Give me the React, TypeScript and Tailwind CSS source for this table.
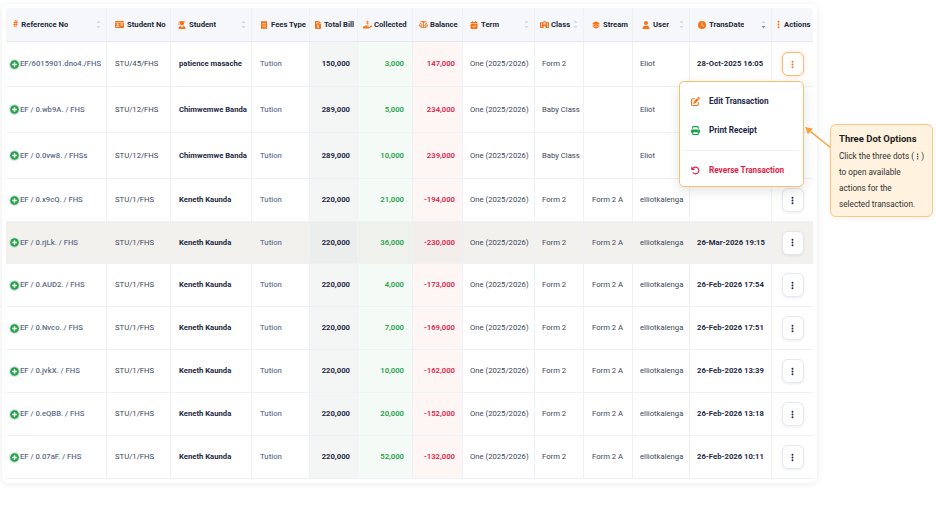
import React from "react";
import {
  FaIdCard,
  FaUserGraduate,
  FaReceipt,
  FaFileInvoiceDollar,
  FaHandHoldingDollar,
  FaScaleBalanced,
  FaCalendarCheck,
  FaSchool,
  FaLayerGroup,
  FaUser,
  FaClock,
  FaEllipsisVertical,
  FaPenToSquare,
  FaPrint,
  FaArrowRotateLeft,
} from "react-icons/fa6";

const GRID =
  "grid grid-cols-[101px_64px_81px_58px_48px_55px_50px_72px_49px_49px_57px_82px_41px]";

type Row = {
  ref: string;
  sno: string;
  name: string;
  bill: string;
  col: string;
  bal: string;
  cls: string;
  stream: string;
  user: string;
  date: string;
  h: string;
  hl?: boolean;
  btn: "active" | "none" | "normal";
};

const rows: Row[] = [
  { ref: "EF/6015901.dno4./FHS", sno: "STU/45/FHS", name: "patience masache", bill: "150,000", col: "3,000", bal: "147,000", cls: "Form 2", stream: "", user: "Eliot", date: "28-Oct-2025 16:05", h: "h-[45px]", btn: "active" },
  { ref: "EF / 0.wb9A. / FHS", sno: "STU/12/FHS", name: "Chimwemwe Banda", bill: "289,000", col: "5,000", bal: "234,000", cls: "Baby Class", stream: "", user: "Eliot", date: "", h: "h-[46px]", btn: "none" },
  { ref: "EF / 0.0vw8. / FHSs", sno: "STU/12/FHS", name: "Chimwemwe Banda", bill: "289,000", col: "10,000", bal: "239,000", cls: "Baby Class", stream: "", user: "Eliot", date: "", h: "h-[46px]", btn: "none" },
  { ref: "EF / 0.x9cQ. / FHS", sno: "STU/1/FHS", name: "Keneth Kaunda", bill: "220,000", col: "21,000", bal: "-194,000", cls: "Form 2", stream: "Form 2 A", user: "elliotkalenga", date: "", h: "h-[43px]", btn: "normal" },
  { ref: "EF / 0.rjLk. / FHS", sno: "STU/1/FHS", name: "Keneth Kaunda", bill: "220,000", col: "36,000", bal: "-230,000", cls: "Form 2", stream: "Form 2 A", user: "elliotkalenga", date: "26-Mar-2026 19:15", h: "h-[42px]", hl: true, btn: "normal" },
  { ref: "EF / 0.AUD2. / FHS", sno: "STU/1/FHS", name: "Keneth Kaunda", bill: "220,000", col: "4,000", bal: "-173,000", cls: "Form 2", stream: "Form 2 A", user: "elliotkalenga", date: "26-Feb-2026 17:54", h: "h-[43px]", btn: "normal" },
  { ref: "EF / 0.Nvco. / FHS", sno: "STU/1/FHS", name: "Keneth Kaunda", bill: "220,000", col: "7,000", bal: "-169,000", cls: "Form 2", stream: "Form 2 A", user: "elliotkalenga", date: "26-Feb-2026 17:51", h: "h-[43px]", btn: "normal" },
  { ref: "EF / 0.jvkX. / FHS", sno: "STU/1/FHS", name: "Keneth Kaunda", bill: "220,000", col: "10,000", bal: "-162,000", cls: "Form 2", stream: "Form 2 A", user: "elliotkalenga", date: "26-Feb-2026 13:39", h: "h-[43px]", btn: "normal" },
  { ref: "EF / 0.eQBB. / FHS", sno: "STU/1/FHS", name: "Keneth Kaunda", bill: "220,000", col: "20,000", bal: "-152,000", cls: "Form 2", stream: "Form 2 A", user: "elliotkalenga", date: "26-Feb-2026 13:18", h: "h-[43px]", btn: "normal" },
  { ref: "EF / 0.07aF. / FHS", sno: "STU/1/FHS", name: "Keneth Kaunda", bill: "220,000", col: "52,000", bal: "-132,000", cls: "Form 2", stream: "Form 2 A", user: "elliotkalenga", date: "26-Feb-2026 10:11", h: "h-[43px]", btn: "normal" },
];

function Sort({ down }: { down?: boolean }) {
  return (
    <svg width="5" height="9" viewBox="0 0 5 9" className="ml-auto shrink-0">
      <path d="M2.5 0.5 L4.5 3 L0.5 3 Z" fill="#d5dbe3" />
      <path d="M2.5 8.5 L4.5 6 L0.5 6 Z" fill={down ? "#8a94a6" : "#d5dbe3"} />
    </svg>
  );
}

function PlusIcon() {
  return (
    <svg width="11" height="11" viewBox="0 0 11 11" className="shrink-0">
      <circle cx="5.5" cy="5.5" r="5.5" fill="#dfe3e8" />
      <circle cx="5.5" cy="5.5" r="4.3" fill="#22a447" />
      <path d="M5.5 3.2 V7.8 M3.2 5.5 H7.8" stroke="#fff" strokeWidth="1.4" />
    </svg>
  );
}

const ic = "text-[#f97316] shrink-0";

function H({
  icon,
  label,
  sort,
  down,
  pl,
  gap = "gap-[3px]",
}: {
  icon: React.ReactNode;
  label: string;
  sort?: boolean;
  down?: boolean;
  pl: string;
  gap?: string;
}) {
  return (
    <div
      className={`flex items-center ${gap} ${pl} ${sort ? "pr-[5px]" : "pr-[1px]"} overflow-hidden whitespace-nowrap border-r border-[#eef1f5]`}
    >
      {icon}
      <span className="font-bold text-[#1e293b] overflow-hidden">{label}</span>
      {sort && <Sort down={down} />}
    </div>
  );
}

export default function App() {
  const cellB = "border-r border-[#eef1f5] flex items-center overflow-hidden whitespace-nowrap";
  return (
    <div className="relative w-[936px] h-[513px] bg-white font-['Roboto','Liberation_Sans',sans-serif] text-[7.7px] leading-none">
      <div className="absolute left-[2px] top-[4px] w-[815px] rounded-[6px] bg-white p-[4px] shadow-[0_1px_6px_rgba(15,23,42,0.09)]">
        {/* header */}
        <div className={`${GRID} h-[34px] bg-[#f5f7fa] border-b border-[#e6eaf0] rounded-t-[3px] text-[7.7px]`}>
          <H pl="pl-[7px]" icon={<span className="text-[#f97316] font-bold text-[9px]">#</span>} label="Reference No" sort />
          <H pl="pl-[8px]" icon={<FaIdCard size={9} className={ic} />} label="Student No" />
          <H pl="pl-[7px]" icon={<FaUserGraduate size={8} className={ic} />} label="Student" sort />
          <H pl="pl-[8px]" icon={<FaReceipt size={8} className={ic} />} label="Fees Type" />
          <H pl="pl-[4px]" gap="gap-[2px]" icon={<FaFileInvoiceDollar size={8} className={ic} />} label="Total Bill" />
          <H pl="pl-[5px]" gap="gap-[2px]" icon={<FaHandHoldingDollar size={9} className={ic} />} label="Collected" />
          <H pl="pl-[6px]" gap="gap-[2px]" icon={<FaScaleBalanced size={9} className={ic} />} label="Balance" />
          <H pl="pl-[7px]" icon={<FaCalendarCheck size={8} className={ic} />} label="Term" sort />
          <H pl="pl-[5px]" gap="gap-[2px]" icon={<FaSchool size={9} className={ic} />} label="Class" sort />
          <H pl="pl-[8px]" icon={<FaLayerGroup size={8} className={ic} />} label="Stream" />
          <H pl="pl-[9px]" icon={<FaUser size={8} className={ic} />} label="User" sort />
          <H pl="pl-[8px]" icon={<FaClock size={8} className={ic} />} label="TransDate" sort down />
          <div className="flex items-center gap-[1px] pl-[2px] overflow-hidden whitespace-nowrap">
            <FaEllipsisVertical size={9} className={ic} />
            <span className="font-bold text-[#1e293b]">Actions</span>
          </div>
        </div>
        {/* body */}
        {rows.map((r, i) => (
          <div
            key={i}
            className={`${GRID} ${r.h} border-b border-[#eef1f5] ${r.hl ? "bg-[#f3f1ee]" : "bg-white"}`}
          >
            <div className={`${cellB} pl-[3px] gap-[0px] font-medium text-[#5d6c89]`}>
              <PlusIcon />
              <span>{r.ref}</span>
            </div>
            <div className={`${cellB} px-[8px] text-[#3b4658]`}>{r.sno}</div>
            <div className={`${cellB} pl-[8px] pr-[1px] font-bold text-[#1e2a44]`}>{r.name}</div>
            <div className={`${cellB} px-[8px] font-medium text-[#6b7a99]`}>Tution</div>
            <div className={`${cellB} justify-end pr-[7px] font-bold text-[#1e2a44] ${r.hl ? "bg-[#eceeed]" : "bg-[#f4f6f6]"}`}>{r.bill}</div>
            <div className={`${cellB} justify-end pr-[8px] font-semibold text-[#1ea34a] ${r.hl ? "bg-[#eef1ec]" : "bg-[#f4faf6]"}`}>{r.col}</div>
            <div className={`${cellB} justify-end pr-[7px] font-semibold text-[#e11d48] ${r.hl ? "bg-[#f3eeec]" : "bg-[#fdf6f4]"}`}>{r.bal}</div>
            <div className={`${cellB} px-[7px] text-[#3b4658]`}>One (2025/2026)</div>
            <div className={`${cellB} px-[7px] text-[#3b4658]`}>{r.cls}</div>
            <div className={`${cellB} px-[8px] text-[#3b4658]`}>{r.stream}</div>
            <div className={`${cellB} px-[7px] text-[#3b4658]`}>{r.user}</div>
            <div className={`${cellB} px-[7px] font-bold text-[#1e2a44]`}>{r.date}</div>
            <div className="flex items-center justify-center">
              {r.btn === "active" && (
                <div className="w-[22px] h-[24px] rounded-[6px] border-[1.5px] border-[#fdba74] bg-white flex items-center justify-center shadow-[0_0_4px_rgba(249,115,22,0.25)]">
                  <FaEllipsisVertical size={9} className="text-[#f97316]" />
                </div>
              )}
              {r.btn === "normal" && (
                <div className="w-[22px] h-[24px] rounded-[6px] border border-[#e5e8ee] bg-white flex items-center justify-center shadow-[0_1px_3px_rgba(15,23,42,0.08)]">
                  <FaEllipsisVertical size={9} className="text-[#1e2a44]" />
                </div>
              )}
            </div>
          </div>
        ))}
      </div>

      {/* dropdown */}
      <div className="absolute left-[679px] top-[81px] w-[125px] h-[106px] rounded-[5px] border border-[#fbbf6e] bg-white shadow-[0_4px_12px_rgba(15,23,42,0.12)] flex flex-col pt-[9px] text-[8.2px] font-bold">
        <div className="h-[20px] flex items-center pl-[11px] gap-[9px] text-[#1e2a4a]">
          <FaPenToSquare size={9} className="text-[#f97316]" />
          <span>Edit Transaction</span>
        </div>
        <div className="mt-[9px] h-[20px] flex items-center pl-[11px] gap-[9px] text-[#1e2a4a]">
          <FaPrint size={9} className="text-[#16a34a]" />
          <span>Print Receipt</span>
        </div>
        <div className="mt-[10px] mx-[4px] h-px bg-[#eef0f3]" />
        <div className="mt-[9px] h-[20px] flex items-center pl-[11px] gap-[9px] text-[#e11d48]">
          <FaArrowRotateLeft size={9} className="text-[#e11d48]" />
          <span>Reverse Transaction</span>
        </div>
      </div>

      {/* arrow */}
      <svg className="absolute left-[800px] top-[120px]" width="36" height="34" viewBox="0 0 36 34">
        <path d="M31 28 L10.4 11.4" stroke="#f7a23b" strokeWidth="1.4" fill="none" />
        <path d="M5 7 L12.9 8.5 L8 14.3 Z" fill="#f7a23b" />
      </svg>

      {/* callout */}
      <div className="absolute left-[830px] top-[124px] w-[103px] h-[93px] rounded-[6px] border border-[#f9c98a] bg-[#fff2de] px-[8px] pt-[7px] shadow-[0_1px_4px_rgba(249,115,22,0.12)]">
        <div className="h-[14px] flex items-center text-[9.5px] font-bold text-[#1f1f1f] whitespace-nowrap">
          Three Dot Options
        </div>
        <div className="mt-[2px] text-[8.2px] leading-[16px] text-[#333333] whitespace-nowrap">
          <div className="flex items-center">
            <span>Click the three dots (</span>
            <FaEllipsisVertical size={7} className="text-[#333333] mx-[1px]" />
            <span>)</span>
          </div>
          <div>to open available</div>
          <div>actions for the</div>
          <div>selected transaction.</div>
        </div>
      </div>
    </div>
  );
}
